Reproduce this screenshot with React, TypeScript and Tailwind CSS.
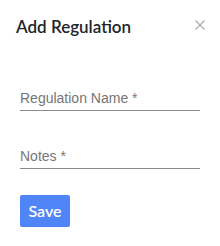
export default function App() {
  return (
    <div className="w-[220px] h-[246px] bg-white relative">
      <div className="flex items-start justify-between pl-[16px] pr-[15px] pt-[16px]">
        <h2 className="text-[17px] leading-[22px] font-semibold text-[#212529]" style={{ fontFamily: "Lato, sans-serif" }}>
          Add Regulation
        </h2>
        <svg width="10" height="10" viewBox="0 0 10 10" className="mt-[4px]">
          <path d="M0.5 0.5 L9.5 9.5 M9.5 0.5 L0.5 9.5" stroke="#a8a8a8" strokeWidth="1.1" />
        </svg>
      </div>
      <div className="px-[20px] pt-[52px] flex flex-col">
        <div className="border-b border-[#8a8a8a] pb-[4px] text-[14px] leading-[16px] text-[#757575]" style={{ fontFamily: "'Liberation Sans', Arial, sans-serif" }}>
          Regulation Name *
        </div>
        <div className="mt-[37px] border-b border-[#8a8a8a] pb-[4px] text-[14px] leading-[16px] text-[#757575]" style={{ fontFamily: "'Liberation Sans', Arial, sans-serif" }}>
          Notes *
        </div>
        <div className="mt-[26px]">
          <button className="w-[50px] h-[32px] rounded-[2px] bg-[#4f85f6] text-white text-[16px] font-semibold" style={{ fontFamily: "Lato, sans-serif" }}>
            Save
          </button>
        </div>
      </div>
    </div>
  );
}
